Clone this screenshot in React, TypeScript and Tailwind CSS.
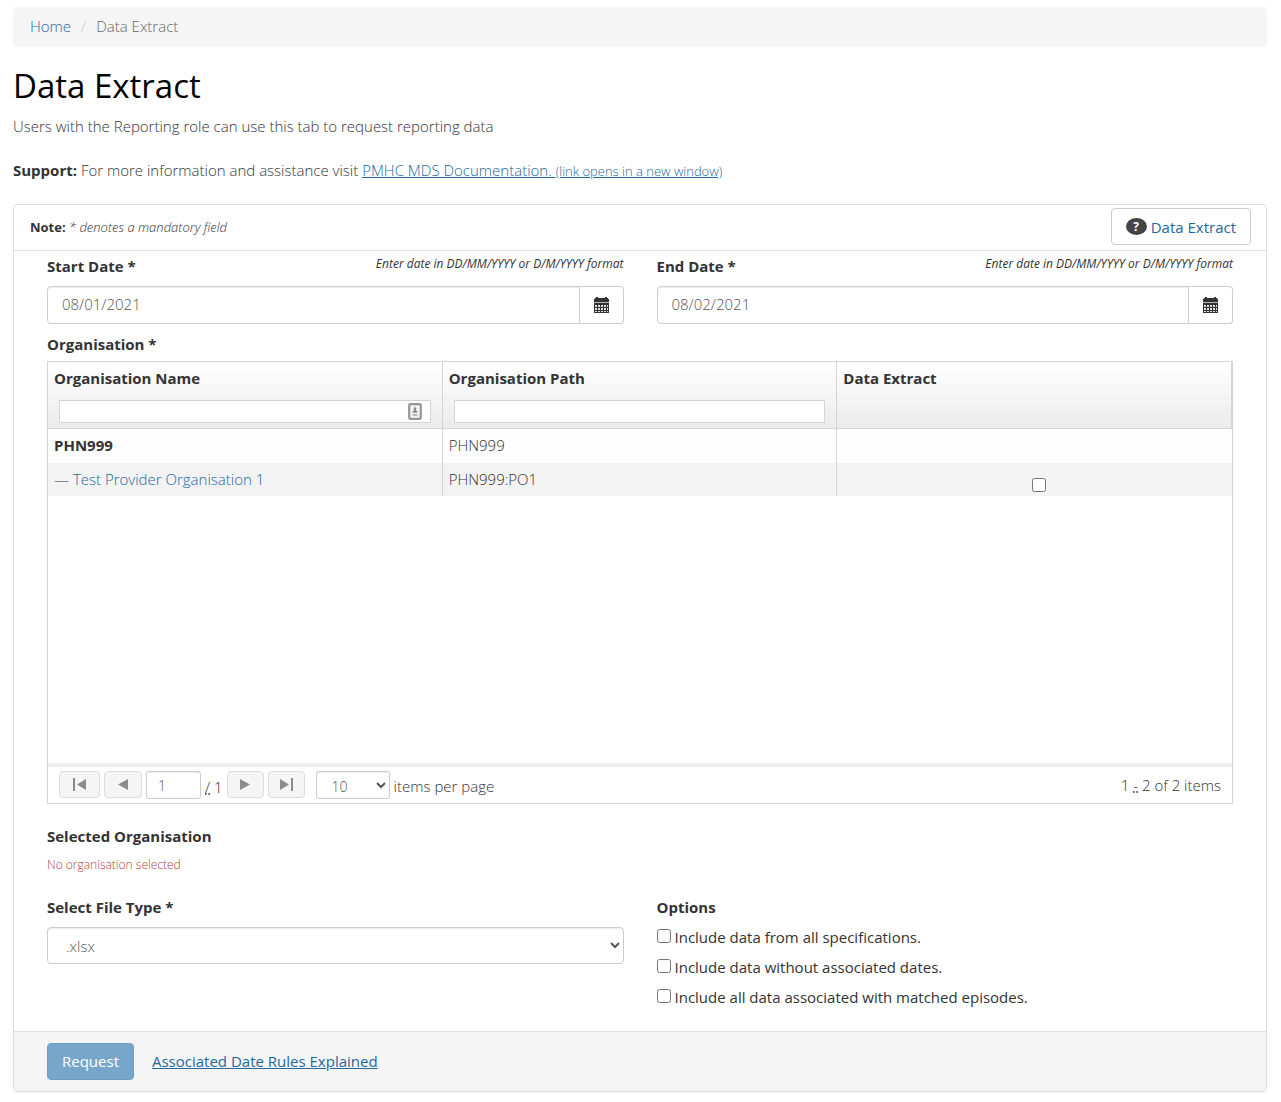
import { useState } from "react";
import type { ReactNode } from "react";

const inputShadow = "shadow-[inset_0_1px_1px_rgba(0,0,0,0.075)]";

function CalendarIcon() {
  return (
    <svg width="15" height="16" viewBox="0 0 15 16" aria-hidden="true">
      <path fill="#333" d="M0 2h1V1h1V0h2v1h7V0h2v1h1v1h1v3H0z" />
      <path fill="#b5b5b5" d="M0 5h15v1H0z" />
      <path fill="#333" d="M0 6h15v10H0z" />
      <g fill="#fff" opacity="0.85">
        {[8, 11, 14].map((y) =>
          [1, 4, 7, 10, 12].map((x) => (
            <rect key={`${x}-${y}`} x={x === 12 ? 13 : x} y={y} width={x === 12 ? 1 : 2} height={y === 14 ? 1 : 2} />
          )),
        )}
      </g>
    </svg>
  );
}

function ContactIcon() {
  return (
    <svg width="14" height="17" viewBox="0 0 14 17" aria-hidden="true">
      <rect x="1.200" y="1.200" width="11.600" height="14.600" rx="1" fill="#f4f4f4" stroke="#969696" strokeWidth="2.200" />
      <circle cx="7" cy="5.500" r="1.300" fill="#8a8a8a" />
      <path fill="#8a8a8a" d="M6.200 6h1.600l.4 1.500 1.200 1v1.300H4.600V8.500l1.200-1z" />
      <path fill="#b0b0b0" d="M4.500 11h5v1.800h-5z" />
    </svg>
  );
}

function DateField({ id, label, initial }: { id: string; label: string; initial: string }) {
  const [value, setValue] = useState(initial);
  return (
    <div>
      <div className="flex h-[35px] items-start justify-between pt-1">
        <label htmlFor={id} className="font-bold">{label} *</label>
        <em className="text-[12px] leading-[18px] font-normal">Enter date in DD/MM/YYYY or D/M/YYYY format</em>
      </div>
      <div className="flex h-[38px]">
        <input
          id={id}
          value={value}
          onChange={(e) => setValue(e.target.value)}
          className={`min-w-0 flex-1 rounded-l border border-[#ccc] bg-white px-[14px] pb-[2px] font-light text-[#555] ${inputShadow}`}
        />
        <button aria-label={`Choose ${label}`} className="flex w-11 items-center justify-center rounded-r border border-l-0 border-[#ccc] bg-white">
          <CalendarIcon />
        </button>
      </div>
    </div>
  );
}

function PagerButton({ label, width, children }: { label: string; width: string; children: ReactNode }) {
  return (
    <button aria-label={label} className={`flex h-[27px] items-center justify-center rounded border border-[#ddd] bg-[#f5f5f5] ${width}`}>
      <svg width="14" height="13" viewBox="0 0 14 13" fill="#8c8c8c" aria-hidden="true">{children}</svg>
    </button>
  );
}

function Option({ children }: { children: ReactNode }) {
  return (
    <label className="flex h-[30px] items-start gap-1 font-normal">
      <input type="checkbox" className="mt-[3px] h-[14px] w-[14px]" />
      <span className="leading-[22px]">{children}</span>
    </label>
  );
}

function OrganisationGrid() {
  const head = "border-r border-b border-[#d4d4d4] p-0 text-left align-top font-bold";
  const cell = "border-r border-[#d4d4d4] px-[6px] pt-[5px] align-top";
  const filter = "block h-[23px] w-full border border-[#d4d4d4] bg-white px-1 text-[13px]";
  return (
    <div className="border border-[#d4d4d4]">
      <div className="h-[401px]">
        <table className="w-full table-fixed border-separate border-spacing-0">
          <thead className="bg-linear-to-b from-white to-[#ebebeb]">
            <tr>
              <th className={head}>
                <div className="h-[38px] px-[6px] pt-[5px]">Organisation Name</div>
                <div className="relative mb-[5px] px-[11px]">
                  <input aria-label="Filter by organisation name" className={filter} />
                  <span className="absolute top-[3px] right-5"><ContactIcon /></span>
                </div>
              </th>
              <th className={head}>
                <div className="h-[38px] px-[6px] pt-[5px]">Organisation Path</div>
                <div className="mb-[5px] px-[11px]">
                  <input aria-label="Filter by organisation path" className={filter} />
                </div>
              </th>
              <th className={head}>
                <div className="px-[6px] pt-[5px]">Data Extract</div>
              </th>
            </tr>
          </thead>
          <tbody>
            <tr className="h-[34px] bg-[#fdfdfd]">
              <td className={`${cell} font-bold`}>PHN999</td>
              <td className={cell}>PHN999</td>
              <td className="p-0" />
            </tr>
            <tr className="h-[33px] bg-[#f3f3f3]">
              <td className={cell}>— <a href="#organisation" className="text-[#23689f]">Test Provider Organisation 1</a></td>
              <td className={cell}>PHN999:PO1</td>
              <td className="pt-[15px] pr-[6px] pl-[14px] align-top">
                <input type="checkbox" aria-label="Extract data for Test Provider Organisation 1" className="mx-auto block h-[14px] w-[14px]" />
              </td>
            </tr>
          </tbody>
        </table>
      </div>
      <div className="flex h-10 items-start justify-between border-t-4 border-[#eee] px-[11px] pt-1">
        <div className="flex items-start">
          <div className="flex gap-1">
            <PagerButton label="First page" width="w-[41px]">
              <path d="M0 0h2v13H0zM13 1v11L4 6.500z" />
            </PagerButton>
            <PagerButton label="Previous page" width="w-[38px]">
              <path d="M12 1v11L2 6.500z" />
            </PagerButton>
            <input aria-label="Page number" defaultValue="1" className={`h-7 w-[55px] rounded-[3px] border border-[#ccc] bg-white px-[11px] text-[14px] text-[#555] ${inputShadow}`} />
          </div>
          <span className="mx-1 pt-[5px]"><abbr title="of">/</abbr> 1</span>
          <div className="flex gap-1">
            <PagerButton label="Next page" width="w-[37px]">
              <path d="M2 1v11l10-5.500z" />
            </PagerButton>
            <PagerButton label="Last page" width="w-[37px]">
              <path d="M1 1v11l9-5.500zM12 0h2v13h-2z" />
            </PagerButton>
          </div>
          <select id="page-size" className={`ml-[11px] h-7 w-[74px] rounded-[3px] border border-[#ccc] bg-white pt-[2px] pr-0 pl-[11px] text-[14px] font-light text-[#555] ${inputShadow}`}>
            <option>10</option>
            <option>25</option>
            <option>50</option>
          </select>
          <label htmlFor="page-size" className="pt-1 pl-1">items per page</label>
        </div>
        <span className="pt-[3px]">1 <abbr title="through">-</abbr> 2 of 2 items</span>
      </div>
    </div>
  );
}

export default function App() {
  return (
    <div className="bg-white pt-[7px] pr-[14px] pb-[10px] pl-[13px] font-['Open_Sans',sans-serif] text-[15px] leading-[22px] font-light text-[#333]">
      <nav aria-label="Breadcrumb" className="flex h-10 items-center rounded bg-[#f5f5f5] px-[17px] pb-[2px]">
        <a href="#home" className="text-[#23689f]">Home</a>
        <span className="px-[10px] text-[#ccc]">/</span>
        <span className="text-[#666]">Data Extract</span>
      </nav>

      <h1 className="mt-[20px] text-[33px] leading-[38px] font-normal text-black">Data Extract</h1>
      <p className="mt-[10px]">Users with the Reporting role can use this tab to request reporting data</p>
      <p className="mt-[22px]">
        <strong className="font-bold">Support:</strong> For more information and assistance visit{" "}
        <a href="#documentation" className="text-[#23689f] underline">
          PMHC MDS Documentation. <span className="text-[13px]">(link opens in a new window)</span>
        </a>
      </p>

      <main className="mt-[22px] rounded border border-[#ddd] shadow-[0_1px_1px_rgba(0,0,0,0.05)]">
        <div className="flex h-[46px] items-start justify-between border-b border-[#ddd] pt-[3px] pr-[15px] pl-4">
          <p className="pt-2 text-[13px]"><strong className="font-bold">Note:</strong> <em>* denotes a mandatory field</em></p>
          <button className="flex h-[37px] items-center gap-1 rounded border border-[#ccc] bg-white px-[14px] font-normal text-[#23689f]">
            <span className="flex h-[17px] w-[21px] items-center justify-center rounded-[50%] bg-[#444] text-[12px] leading-[17px] font-bold text-white">?</span>
            Data Extract
          </button>
        </div>

        <div className="px-[33px]">
          <div className="grid grid-cols-2 gap-[33px]">
            <DateField id="start-date" label="Start Date" initial="08/01/2021" />
            <DateField id="end-date" label="End Date" initial="08/02/2021" />
          </div>
          <h2 className="pt-[9px] pb-[6px] font-bold">Organisation *</h2>
          <OrganisationGrid />
          <h2 className="mt-[21px] font-bold">Selected Organisation</h2>
          <p className="mt-[8px] text-[12px] leading-5 text-[#a94442]">No organisation selected</p>
          <div className="mt-[21px] grid grid-cols-2 gap-[33px]">
            <div>
              <label htmlFor="file-type" className="block font-bold">Select File Type *</label>
              <select id="file-type" className={`mt-[9px] h-[37px] w-full rounded border border-[#ccc] bg-white pr-0 pl-[14px] font-light text-[#555] ${inputShadow}`}>
                <option>.xlsx</option>
                <option>.csv</option>
              </select>
            </div>
            <fieldset className="pb-[15px]">
              <legend className="mb-2 font-bold">Options</legend>
              <Option>Include data from all specifications.</Option>
              <Option>Include data without associated dates.</Option>
              <Option>Include all data associated with matched episodes.</Option>
            </fieldset>
          </div>
        </div>

        <div className="flex items-center gap-[18px] rounded-b border-t border-[#ddd] bg-[#f5f5f5] px-[33px] py-[11px] font-normal">
          <button className="h-[37px] rounded border border-[#6c9fc8] bg-[#78a6cb] px-[14px] pb-[2px] text-white">Request</button>
          <a href="#date-rules" className="pb-[2px] text-[#23689f] underline">Associated Date Rules Explained</a>
        </div>
      </main>
    </div>
  );
}
